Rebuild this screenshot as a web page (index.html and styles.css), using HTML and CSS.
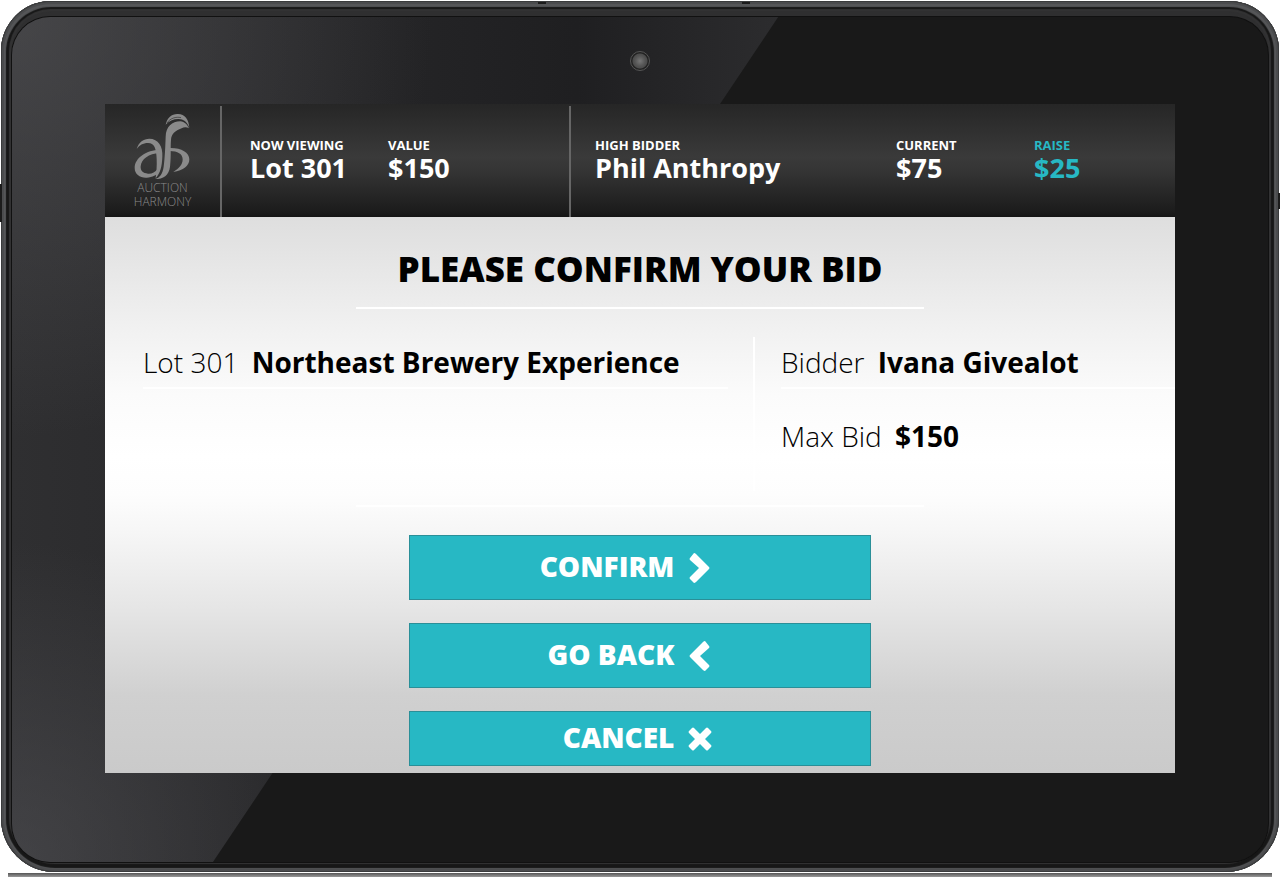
FILE: index.html
```html
<!DOCTYPE html>
<html lang="en">
<head>
    <meta charset="UTF-8">
    <meta name="viewport" content="width=device-width, initial-scale=1.0">
    <title>Auction Harmony - Confirm Bid</title>
    <link rel="stylesheet" href="styles.css">
</head>
<body>
    <div class="tablet">
        <span class="notch notch-top-left"></span>
        <span class="notch notch-top-right"></span>
        <span class="notch notch-side-left"></span>
        <span class="notch notch-side-right"></span>
        <div class="glass">
            <span class="camera"></span>
            <div class="screen">
                <header class="lot-bar">
                    <div class="logo">
                        <svg width="57" height="68" viewBox="105 42 171 204" fill="#8a8a8a" aria-hidden="true">
                            <path d="M113 150C119 129 134 119 151 119C178 119 192 143 190 172C189 205 184 221 170 238C172 219 174 201 173 180C172 149 166 132 147 132C132 132 121 139 113 150Z"/>
                            <path d="M182 152C143 153 107 176 107 207C107 226 123 237 143 236C160 235 174 229 181 216L176 210C168 220 158 225 147 224C132 223 124 215 125 202C127 180 149 164 182 162Z"/>
                            <path d="M168 240C182 236 191 225 194 203C198 174 199 139 200 113C201 83 219 67 244 67C257 68 265 77 270 88C263 84 255 84 248 88C228 95 217 105 216 123C214 144 217 171 213 203C210 229 193 240 168 240Z"/>
                            <path d="M200 77C205 55 219 44 237 45C258 46 269 61 271 86C264 68 253 60 239 60C222 60 210 66 200 77Z"/>
                            <path d="M204 72C213 58 231 52 246 56" fill="none" stroke="#303030" stroke-width="2"/>
                            <path d="M212 147C246 146 271 160 271 181C271 201 253 214 223 219C240 208 251 198 251 181C251 165 236 156 212 156Z"/>
                        </svg>
                        <div class="logo-text">AUCTION<br>HARMONY</div>
                    </div>
                    <div class="viewing">
                        <div class="stat"><span>NOW VIEWING</span><b>Lot 301</b></div>
                        <div class="stat"><span>VALUE</span><b>$150</b></div>
                    </div>
                    <div class="bidding">
                        <div class="stat"><span>HIGH BIDDER</span><b>Phil Anthropy</b></div>
                        <div class="stat"><span>CURRENT</span><b>$75</b></div>
                        <div class="stat raise"><span>RAISE</span><b>$25</b></div>
                    </div>
                </header>
                <main>
                    <h1>PLEASE CONFIRM YOUR BID</h1>
                    <hr>
                    <div class="details">
                        <div class="lot">
                            <p>Lot 301 <b>Northeast Brewery Experience</b></p>
                        </div>
                        <div class="bidder">
                            <p>Bidder <b>Ivana Givealot</b></p>
                            <p>Max Bid <b>$150</b></p>
                        </div>
                    </div>
                    <hr>
                    <div class="actions">
                        <button type="button">
                            <span>CONFIRM</span>
                            <svg width="24" height="32" viewBox="0 0 24 32" aria-hidden="true"><path d="M2 6L6 1Q7 1 8 2L21 15Q22 16 21 17L8 30Q7 31 6 31L2 27Q1 26 2 25L11 16L2 8Q1 7 2 6Z"/></svg>
                        </button>
                        <button type="button">
                            <span>GO BACK</span>
                            <svg width="24" height="32" viewBox="0 0 24 32" aria-hidden="true"><path d="M21 6L17 1Q16 1 15 2L2 15Q1 16 2 17L15 30Q16 31 17 31L21 27Q22 26 21 25L12 16L21 8Q22 7 21 6Z"/></svg>
                        </button>
                        <button type="button" class="cancel">
                            <span>CANCEL</span>
                            <svg width="24" height="24" viewBox="0 0 24 24" aria-hidden="true"><path d="M6 1L12 7L18 1Q19 0 20 1L23 4Q24 5 23 6L17 12L23 18Q24 19 23 20L20 23Q19 24 18 23L12 17L6 23Q5 24 4 23L1 20Q0 19 1 18L7 12L1 6Q0 5 1 4L4 1Q5 0 6 1Z"/></svg>
                        </button>
                    </div>
                </main>
            </div>
        </div>
    </div>
    <div class="table-edge"></div>
</body>
</html>
```
FILE: styles.css
```css
* {
    box-sizing: border-box;
}
body {
    margin: 0;
    padding-top: 1px;
    min-height: 100vh;
    display: flex;
    flex-direction: column;
    font-family: "Open Sans", sans-serif;
    color: #000;
    background: #fff;
}
.tablet {
    position: relative;
    flex: 1;
    display: flex;
    margin: 0 1px;
    padding: 16px 11px 10px;
    border-radius: 50px 50px 54px 54px;
    background: #2f2f30;
    box-shadow: inset 0 0 0 1px #3a3b3c, inset 0 0 0 3px #4b4c4e, inset 0 1px 1px 5px #555658, inset 0 0 1px 8px #171717, inset 0 0 1px 10px #343435;
}
.notch {
    position: absolute;
    background: #1c1c1c;
}
.notch-top-left,
.notch-top-right {
    top: 1px;
    width: 8px;
    height: 2px;
}
.notch-top-left {
    left: 42%;
}
.notch-top-right {
    left: 58%;
}
.notch-side-left,
.notch-side-right {
    width: 2px;
    height: 38px;
    top: 21%;
}
.notch-side-left {
    left: -1px;
}
.notch-side-right {
    right: -1px;
    height: 16px;
    top: 22%;
}
.glass {
    position: relative;
    flex: 1;
    display: flex;
    padding: 87px 93px 89px;
    border-radius: 38px;
    background: #191919;
    box-shadow: 0 0 0 1px #111;
}
/* reflection across the left side of the glass */
.glass::before {
    content: "";
    position: absolute;
    inset: 0;
    border-radius: 38px 0 0 38px;
    background:
        radial-gradient(circle at 0 0, rgba(85, 85, 88, 0.6), transparent 420px),
        radial-gradient(circle at 0 100%, rgba(80, 80, 84, 0.6), transparent 320px),
        linear-gradient(90deg, #2f2f31, #1f1f21 45%, #2c2c2e 61%);
    clip-path: polygon(0 0, 61% 0, 16% 100%, 0 100%);
}
.camera {
    position: absolute;
    top: 34px;
    left: 50%;
    width: 20px;
    height: 20px;
    margin-left: -10px;
    border: 1px solid #555;
    border-radius: 50%;
    background: radial-gradient(circle, #777 0, #555 5px, #4c4c4c 7px, #222 8px);
}
.screen {
    position: relative;
    flex: 1;
    display: flex;
    flex-direction: column;
}
.lot-bar {
    height: 113px;
    display: grid;
    grid-template-columns: 115fr 349fr 606fr;
    padding-top: 2px;
    color: #fff;
    background: linear-gradient(#262626, #3a3a3a 47%, #343434 60%, #1b1b1b 96%, #151515);
}
.logo {
    padding-top: 7px;
    text-align: center;
}
.logo svg {
    display: block;
    margin: 0 auto;
}
.logo-text {
    font-size: 12px;
    font-weight: 300;
    line-height: 14px;
    color: #8a8a8a;
}
.viewing,
.bidding {
    display: grid;
    padding-left: 28px;
    padding-top: 32px;
    border-left: 2px solid #666;
}
.viewing {
    grid-template-columns: 138fr 181fr;
}
.bidding {
    grid-template-columns: 301fr 138fr 141fr;
    padding-left: 24px;
}
.stat span,
.stat b {
    display: block;
    white-space: nowrap;
}
.stat span {
    font-size: 13px;
    font-weight: 700;
    line-height: 15px;
}
.stat b {
    font-size: 27px;
    font-weight: 700;
    line-height: 30px;
}
.stat.raise {
    color: #27b8c4;
}
main {
    flex: 1;
    padding-top: 28px;
    background: linear-gradient(#dedede, #f0f0f0 19%, #fbfbfb 32%, #fff 43%, #fdfdfd 50%, #f7f7f7 56%, #e6e6e6 70%, #d0d0d0 86%, #cacaca);
}
h1 {
    margin: 0;
    font-size: 35px;
    font-weight: 800;
    line-height: 48px;
    text-align: center;
}
hr {
    width: 53%;
    height: 2px;
    margin: 14px auto 28px;
    border: 0;
    background: #fff;
}
.details {
    display: grid;
    grid-template-columns: 648fr 422fr;
    height: 154px;
}
.details p {
    margin: 0 0 22px;
    height: 52px;
    font-size: 28px;
    font-weight: 300;
    line-height: 51px;
    border-bottom: 2px solid #fff;
    white-space: nowrap;
}
.details b {
    margin-left: 6px;
    font-weight: 700;
}
.lot {
    padding: 0 25px 0 38px;
}
.bidder {
    padding-left: 26px;
    border-left: 2px solid #fff;
}
.actions {
    display: flex;
    flex-direction: column;
    align-items: center;
    gap: 23px;
    padding-bottom: 7px;
}
.actions button {
    display: grid;
    grid-template-columns: 265fr 182fr;
    align-items: center;
    column-gap: 14px;
    width: 462px;
    max-width: 90%;
    height: 65px;
    padding: 0;
    border: 1px solid #2a8f98;
    font-family: inherit;
    font-size: 28px;
    font-weight: 800;
    text-align: right;
    color: #fff;
    background: #27b8c4;
    cursor: pointer;
}
.actions span {
    padding-bottom: 4px;
}
.actions .cancel {
    height: 55px;
}
.actions svg {
    fill: #fff;
}
.table-edge {
    height: 4px;
    margin: 1px 8px 0;
    background: linear-gradient(#555, #999);
}
```
